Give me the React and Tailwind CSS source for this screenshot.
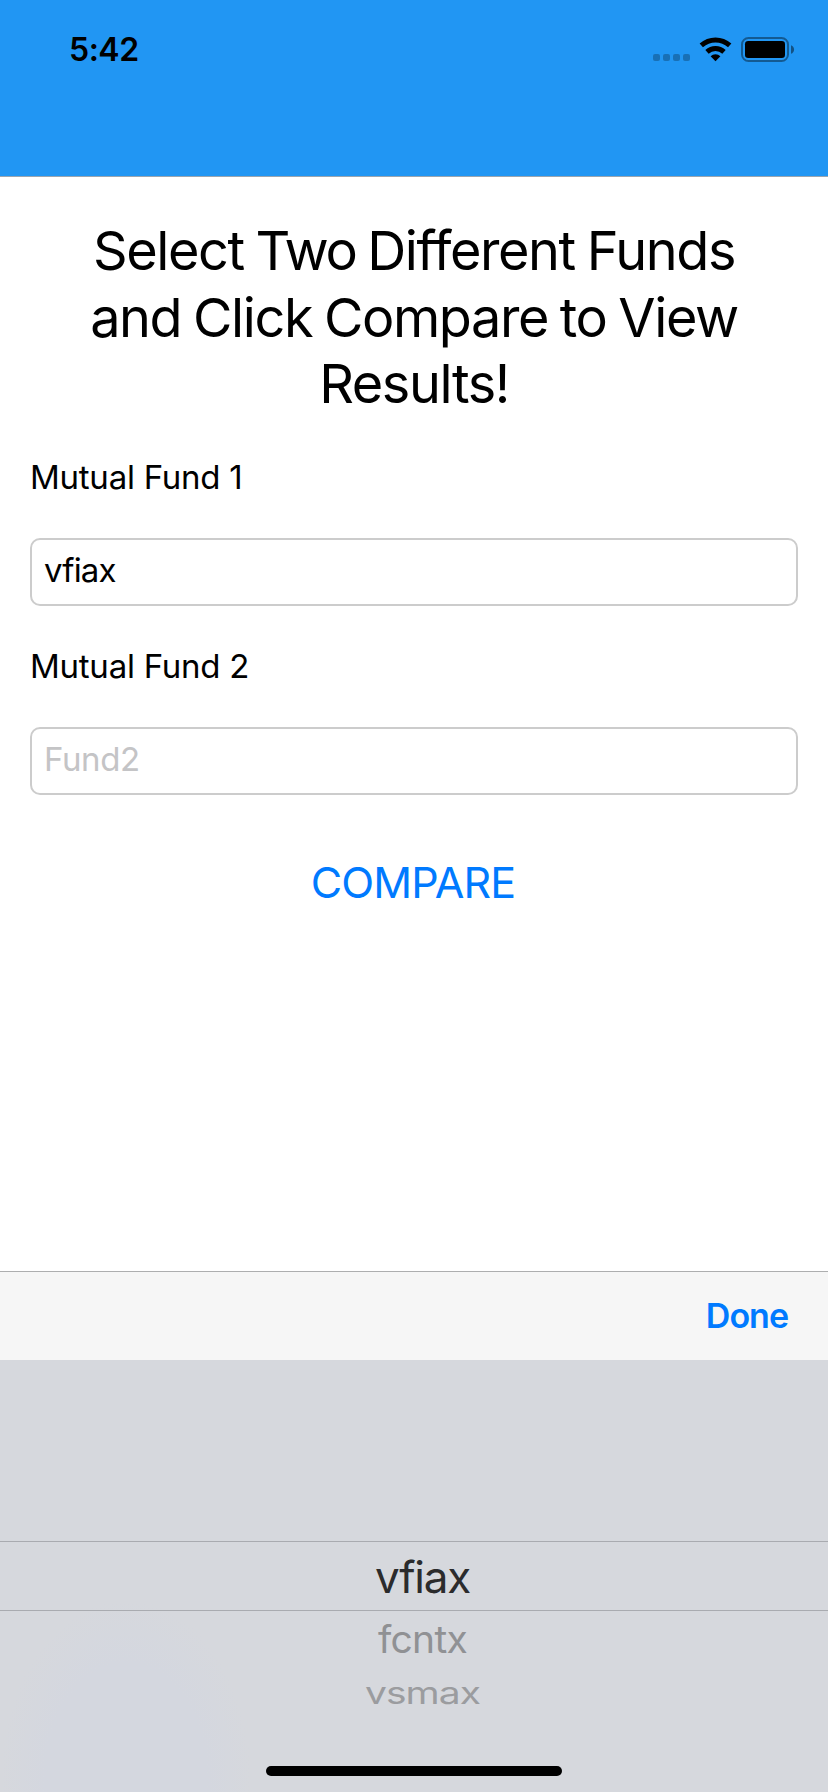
function StatusIcons() {
  return (
    <svg width="144" height="28" viewBox="652 36 144 28" aria-hidden="true">
      <g fill="#000" fillOpacity="0.25">
        <rect x="653" y="54" width="7" height="7" rx="2" />
        <rect x="663" y="54" width="7" height="7" rx="2" />
        <rect x="673" y="54" width="7" height="7" rx="2" />
        <rect x="683" y="54" width="7" height="7" rx="2" />
      </g>
      <g fill="none" stroke="#000" strokeWidth="5">
        <path d="M701.3 45.3A21.3 21.3 0 0 1 729.7 45.3" />
        <path d="M707 51.8A12.7 12.7 0 0 1 724 51.8" />
      </g>
      <path d="M715.5 61.2L710.6 56.2A7 7 0 0 1 720.4 56.2Z" />
      <rect x="742" y="38" width="46" height="23" rx="6.5" fill="none" stroke="#000" strokeOpacity="0.4" strokeWidth="2" />
      <rect x="745" y="41" width="40" height="17" rx="3.2" />
      <path d="M791 45.2C795.1 46.6 795.1 52.4 791 53.8Z" fillOpacity="0.45" />
    </svg>
  );
}

function FundField({ label, value, placeholder }) {
  return (
    <label className="flex flex-col gap-[41px]">
      <span className="h-10 text-[33px] leading-10 tracking-[-0.25px]">{label}</span>
      <input
        className="h-[68px] w-full rounded-[10px] border-2 border-[#cccccc] bg-white px-3 pb-[5px] text-[33px] tracking-[-0.8px] outline-none placeholder:tracking-[-0.4px] placeholder:text-[#c4c4c6]"
        defaultValue={value}
        placeholder={placeholder}
      />
    </label>
  );
}

export default function App() {
  return (
    <div className="flex h-[1792px] w-[828px] flex-col overflow-hidden bg-white font-['Inter',sans-serif] text-black">
      <header className="h-[177px] shrink-0 border-b border-[#9aa5b0] bg-[#2196f3]">
        <div className="flex h-[100px] items-center justify-between pr-8 pl-[69px]">
          <span className="text-[32px] leading-10 font-semibold tracking-[-0.5px]">5:42</span>
          <StatusIcons />
        </div>
      </header>

      <main className="flex flex-col px-[30px] pt-[41px]">
        <h1 className="h-[199px] text-center text-[54px] leading-[66.5px] tracking-[-1.4px] [font-feature-settings:'calt'_0] [word-spacing:-2px]">
          Select <span className="tracking-[-2.4px]">Two</span> Different Funds
          <br />
          and Click Compare to View
          <br />
          Results!
        </h1>
        <div className="mt-10 flex flex-col gap-10">
          <FundField label="Mutual Fund 1" value="vfiax" />
          <FundField label="Mutual Fund 2" placeholder="Fund2" />
        </div>
        <button className="mt-[61px] mr-[2px] self-center text-[43px] leading-[52px] tracking-[-0.9px] text-[#007aff]">
          COMPARE
        </button>
      </main>

      <section className="mt-auto flex h-[521px] shrink-0 flex-col">
        <div className="flex h-[89px] items-center justify-end border-t border-[#adaeaf] bg-[#f6f6f6] pr-10">
          <button className="text-[34px] leading-10 font-semibold tracking-[-1px] text-[#007aff]">Done</button>
        </div>
        <div className="flex h-[432px] flex-col items-center bg-[#d6d8dd] bg-[radial-gradient(ellipse_125px_180px_at_126px_420px,#d4d7df_65%,#d6d8dd_100%)] pt-[181px] text-[39px] leading-[68px]">
          <div className="flex h-[70px] w-full justify-center border-y border-[#a9abb0] pt-px pl-[17px] text-[44px] text-[#2b2b2c]">
            <span className="tracking-[-1.2px]">vfiax</span>
          </div>
          <div className="flex h-[56px] items-center pl-[17px] text-[#909194]">
            <span className="scale-y-[0.97] tracking-[-0.7px]">fcntx</span>
          </div>
          <div className="flex h-[52px] items-center pl-[17px] text-[#9b9c9f]">
            <span className="scale-y-[0.77] tracking-[-1px]">vsmax</span>
          </div>
          <div className="mt-auto mb-4 h-[10px] w-[296px] rounded-full bg-black" />
        </div>
      </section>
    </div>
  );
}
